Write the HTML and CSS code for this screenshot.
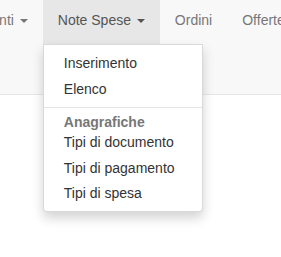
FILE: index.html
```html
<!DOCTYPE html>
<html>
<head>
<meta charset="utf-8">
<link rel="stylesheet" href="styles.css">
</head>
<body>

<div class="page">
  <div class="navbar">
    <ul class="nav">
      <li class="nav-item"><a class="nav-link" href="#">Clienti <span class="caret"></span></a></li>
      <li class="nav-item open">
        <a class="nav-link" href="#">Note Spese <span class="caret"></span></a>
        <ul class="dropdown-menu">
          <li><a href="#">Inserimento</a></li>
          <li><a href="#">Elenco</a></li>
          <li class="divider"></li>
          <li class="dropdown-header">Anagrafiche</li>
          <li><a href="#">Tipi di documento</a></li>
          <li><a href="#">Tipi di pagamento</a></li>
          <li><a href="#">Tipi di spesa</a></li>
        </ul>
      </li>
      <li class="nav-item"><a class="nav-link" href="#">Ordini</a></li>
      <li class="nav-item"><a class="nav-link" href="#">Offerte</a></li>
    </ul>
  </div>
</div>

</body>
</html>
```

FILE: styles.css
```css
body {
    margin: 0;
    font-family: "Liberation Sans", Arial, sans-serif;
    font-size: 14px;
    color: #333;
    background: #fff;
}

a {
    text-decoration: none;
}

.page {
    height: 257px;
    overflow: hidden;
}

.navbar {
    height: 94px;
    background-color: #f8f8f8;
    border-bottom: 1px solid #e7e7e7;
}

.nav {
    display: flex;
    margin: 0 0 0 -40px;
    padding: 0;
    list-style: none;
}

.nav-item {
    position: relative;
    flex: none;
}

.nav-link {
    display: block;
    padding: 10px 15px 14px;
    line-height: 20px;
    color: #777;
    white-space: nowrap;
}

.open .nav-link {
    background-color: #e7e7e7;
    color: #555;
}

.caret {
    display: inline-block;
    width: 0;
    height: 0;
    margin-left: 2px;
    vertical-align: middle;
    border-top: 4px solid;
    border-left: 4px solid transparent;
    border-right: 4px solid transparent;
}

.dropdown-menu {
    position: absolute;
    top: 100%;
    left: 0;
    z-index: 10;
    box-sizing: border-box;
    width: 160px;
    margin: 0;
    padding: 6px 0 4px;
    list-style: none;
    background-color: #fff;
    border: 1px solid rgba(0, 0, 0, .15);
    border-radius: 0 0 4px 4px;
    box-shadow: 0 6px 12px rgba(0, 0, 0, .175);
}

.dropdown-menu a {
    display: block;
    padding: 3px 20px;
    line-height: 19.5px;
    color: #333;
    white-space: nowrap;
}

.divider {
    height: 1px;
    margin: 5px 0 6px;
    background-color: #e5e5e5;
}

.dropdown-header {
    padding: 0 20px;
    line-height: 16px;
    font-weight: bold;
    color: #777;
    white-space: nowrap;
}
```
